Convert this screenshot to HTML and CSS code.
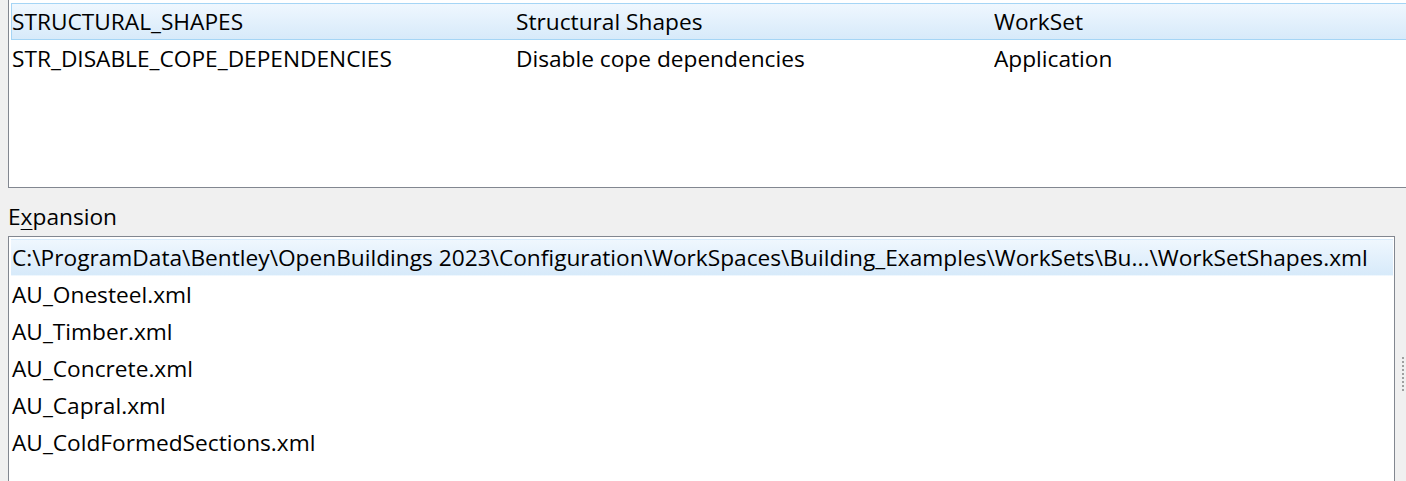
FILE: index.html
```html
<!DOCTYPE html>
<html>
<head>
<meta charset="utf-8">
<link rel="stylesheet" href="styles.css">
</head>
<body>
<div class="top-list">
  <div class="row selected">
    <span class="cell c1">STRUCTURAL_SHAPES</span>
    <span class="cell c2">Structural Shapes</span>
    <span class="cell c3">WorkSet</span>
  </div>
  <div class="row">
    <span class="cell c1">STR_DISABLE_COPE_DEPENDENCIES</span>
    <span class="cell c2">Disable cope dependencies</span>
    <span class="cell c3">Application</span>
  </div>
</div>
<div class="label">E<span class="accel">x</span>pansion</div>
<div class="bottom-area">
  <div class="bottom-list">
    <div class="item selected">C:\ProgramData\Bentley\OpenBuildings 2023\Configuration\WorkSpaces\Building_Examples\WorkSets\Bu...\WorkSetShapes.xml</div>
    <div class="item">AU_Onesteel.xml</div>
    <div class="item">AU_Timber.xml</div>
    <div class="item">AU_Concrete.xml</div>
    <div class="item">AU_Capral.xml</div>
    <div class="item">AU_ColdFormedSections.xml</div>
  </div>
  <div class="grip"></div>
</div>
</body>
</html>
```
FILE: styles.css
```css
html, body {
  margin: 0;
  padding: 0;
  background: #f0f0f0;
  overflow: hidden;
  width: 1406px;
  height: 481px;
}
body {
  font-family: "Open Sans", "Noto Sans", sans-serif;
  font-size: 22.7px;
  color: #000;
}
.top-list {
  margin-left: 8px;
  width: 1420px;
  height: 184px;
  background: #fff;
  border-left: 1px solid #828790;
  border-bottom: 1px solid #828790;
  padding: 3px 0 0 2px;
  box-sizing: content-box;
}
.row {
  display: grid;
  grid-template-columns: 504px 478px 1fr;
  height: 35px;
  line-height: 34px;
  padding-top: 1px;
  box-sizing: border-box;
  height: 37px;
  border: 1px solid transparent;
  white-space: nowrap;
}
.selected {
  border: 1px solid #a5d5f5;
  background: linear-gradient(to bottom, #eff7fe, #d7eafa);
}
.cell { overflow: hidden; }
.label {
  margin-top: 14px;
  margin-bottom: 4px;
  padding-left: 8px;
  height: 30px;
  line-height: 30px;
}
.accel {
  text-decoration: underline;
  text-decoration-thickness: 1px;
  text-underline-offset: 4px;
}
.bottom-area {
  display: flex;
  align-items: flex-start;
}
.bottom-list {
  margin-left: 8px;
  width: 1382px;
  height: 260px;
  background: #fff;
  border: 1px solid #828790;
  padding: 2px 1px 0 2px;
  box-sizing: content-box;
  flex: none;
}
.item {
  box-sizing: border-box;
  height: 37px;
  line-height: 34px;
  padding-top: 1px;
  border: 1px solid transparent;
  white-space: nowrap;
}
.grip {
  flex: none;
  margin-left: 7px;
  margin-top: 121px;
  width: 2px;
  height: 34px;
  background: repeating-linear-gradient(to bottom, #a0a0a0 0 2px, transparent 2px 4px);
}
```
